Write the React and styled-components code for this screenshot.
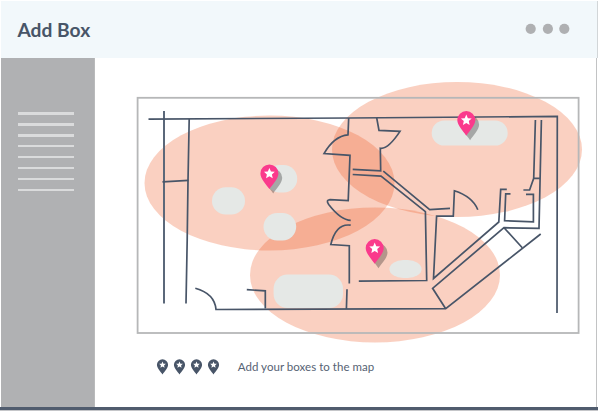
import React from "react";
import styled, { createGlobalStyle } from "styled-components";

const GlobalStyle = createGlobalStyle`
  body { margin: 0; background: #fff; }
  * { box-sizing: border-box; }
`;

const Page = styled.div`
  width: 600px;
  height: 412px;
  padding: 1px 2px 1px 1px;
  display: flex;
  flex-direction: column;
  overflow: hidden;
  background: #fff;
  color: #485568;
  font-family: Lato, sans-serif;
`;

const Header = styled.header`
  height: 57px;
  flex: none;
  display: flex;
  align-items: center;
  justify-content: space-between;
  padding: 0 26px 0 16.5px;
  background: #f2f8fb;
  border-right: 1px solid #d2d6d8;
`;

const Title = styled.h1`
  margin: 0;
  font-size: 19.2px;
  line-height: 24px;
  font-weight: 700;
  white-space: nowrap;
`;

const MoreIcon = styled.svg`
  width: 48px;
  height: 12px;
  display: block;
  margin-bottom: 1px;
`;

const Body = styled.div`
  height: 349px;
  flex: none;
  display: flex;
  margin-right: 1px;
  border-right: 1px solid #c2c3c4;
`;

const Sidebar = styled.nav`
  width: 94px;
  flex: none;
  display: flex;
  flex-direction: column;
  gap: 8.4px;
  padding: 54.3px 20px 0 17px;
  background: #b0b1b3;
  border-right: 1px solid #b9babb;
`;

const MenuLine = styled.span`
  height: 2.5px;
  flex: none;
  background: #dadbdc;
`;

const Main = styled.main`
  flex: 1;
  min-width: 0;
  display: flex;
  flex-direction: column;
`;

const Plan = styled.svg`
  width: 501px;
  height: 292px;
  flex: none;
  display: block;
`;

const Legend = styled.div`
  display: flex;
  align-items: center;
  gap: 18.3px;
  height: 34px;
  padding-left: 60.5px;
`;

const LegendPins = styled.div`
  display: flex;
  gap: 4px;
`;

const SmallPin = styled.svg`
  width: 13px;
  height: 16px;
  display: block;
`;

const Caption = styled.span`
  font-size: 11.5px;
  line-height: 16px;
  letter-spacing: 0.03px;
  color: #566274;
  white-space: nowrap;
`;

const BottomBar = styled.footer`
  height: 3px;
  flex: none;
  margin-left: -1px;
  background: #505c6e;
  box-shadow: 0 1px 0 #c5c6c9;
`;

const PIN = "M0 24.7C-3.2 19.8-9 14.3-9 9A9 9 0 0 1 9 9C9 14.3 3.2 19.8 0 24.7Z";
const STAR =
  "M0 3.5L1.55 7.1L5.4 7.4L2.5 10L3.35 13.8L0 11.8L-3.35 13.8L-2.5 10L-5.4 7.4L-1.55 7.1Z";

function MapPin({ x, y }) {
  return (
    <g transform={`translate(${x} ${y})`}>
      <path d={PIN} transform="translate(3.8 4.4)" fill="#000" opacity="0.28" />
      <path d={PIN} fill="#fa3a8c" />
      <path d={STAR} fill="#fff" />
    </g>
  );
}

const coverage = [
  [269.5, 183],
  [457, 149.5],
  [375, 275],
];

const walls = [
  "M148.5 119.1L350 118L557.3 116.4L557 313",
  "M189.2 119L188 181L187.2 240L186 303.5",
  "M162.5 181.8L188.5 180.4",
  "M348.7 118L348 134.8Q334 136 324 153.6L350 155.3L348.2 200.7L330 199.6Q325.5 200 328.7 204.5Q341 220.3 350.7 220.3",
  "M350.7 225.2Q336 223 330.8 244.5L349.3 245.7V283.5",
  "M347 289.3L346.4 309",
  "M246.8 289.7L265.3 290.8V308.5",
  "M195.3 288.2Q214.7 293.5 216 309.5L445.7 308.7L540.7 234",
  "M358.8 281.2L426.7 280.5L425.4 211.6L381 176.1L352.7 174.5",
  "M352.7 169.4L380.7 170.8L380.3 148.3Q388 149.5 400 131.4L379 130.4L376.7 117.8",
  "M383.3 171.2L429.7 209.6L450 208.4",
  "M477.8 209.7Q472.5 196.7 454.4 190.8L453.3 216.1H436.6L433.5 278.5L498.8 222L500.7 189.4H506.8",
  "M510.5 193.8H505.7L504.6 220.7L533.4 221.9V194.3H526",
  "M523.4 190H529.6L533.7 178.3L535.4 120M533.7 178.3H539.9",
  "M541.4 120L539 228.4L504 227.7L432.6 288.3L445.7 308.7M504 227.7L522.3 247.8",
];

function FloorPlan() {
  return (
    <Plan viewBox="95 58 501 292">
      <g fill="#ec561f" fillOpacity="0.28">
        {coverage.map(([cx, cy]) => (
          <ellipse key={cx} cx={cx} cy={cy} rx="125" ry="67.5" />
        ))}
      </g>
      <rect x="137.6" y="97.8" width="441" height="235.2" fill="none" stroke="#b6b7b8" strokeWidth="1.8" />
      <g fill="#e5e8e6">
        <rect x="431.7" y="120.4" width="76" height="25.2" rx="12.6" />
        <rect x="266" y="165" width="31.2" height="27.5" rx="13.5" />
        <rect x="212" y="187.2" width="33" height="27.4" rx="13.7" />
        <rect x="263.5" y="213" width="32.7" height="27.5" rx="13.7" />
        <rect x="273.6" y="274.6" width="69.4" height="33.4" rx="14" />
        <rect x="389.4" y="260" width="32.2" height="18" rx="14" ry="9" />
      </g>
      <g fill="none" stroke="#485568" strokeWidth="1.7">
        <path d="M164 111V303.5" stroke="#5b687a" strokeWidth="2" />
        {walls.map((d) => (
          <path key={d} d={d} />
        ))}
      </g>
      <MapPin x={269.4} y={164.4} />
      <MapPin x={466.3} y={111.1} />
      <MapPin x={374.7} y={239.1} />
    </Plan>
  );
}

export default function App() {
  return (
    <>
      <GlobalStyle />
      <Page>
        <Header>
          <Title>Add Box</Title>
          <MoreIcon viewBox="0 0 48 12" fill="#afb0b2">
            <circle cx="7.7" cy="5.8" r="5.1" />
            <circle cx="24.9" cy="5.8" r="5.1" />
            <circle cx="41.3" cy="5.8" r="5.1" />
          </MoreIcon>
        </Header>
        <Body>
          <Sidebar>
            {Array.from({ length: 8 }, (_, i) => (
              <MenuLine key={i} />
            ))}
          </Sidebar>
          <Main>
            <FloorPlan />
            <Legend>
              <LegendPins>
                {[0, 1, 2, 3].map((i) => (
                  <SmallPin key={i} viewBox="-10.5 -0.3 21 25.5">
                    <path d={PIN} fill="#485568" />
                    <path d={STAR} fill="#fff" />
                  </SmallPin>
                ))}
              </LegendPins>
              <Caption>Add your boxes to the map</Caption>
            </Legend>
          </Main>
        </Body>
        <BottomBar />
      </Page>
    </>
  );
}
